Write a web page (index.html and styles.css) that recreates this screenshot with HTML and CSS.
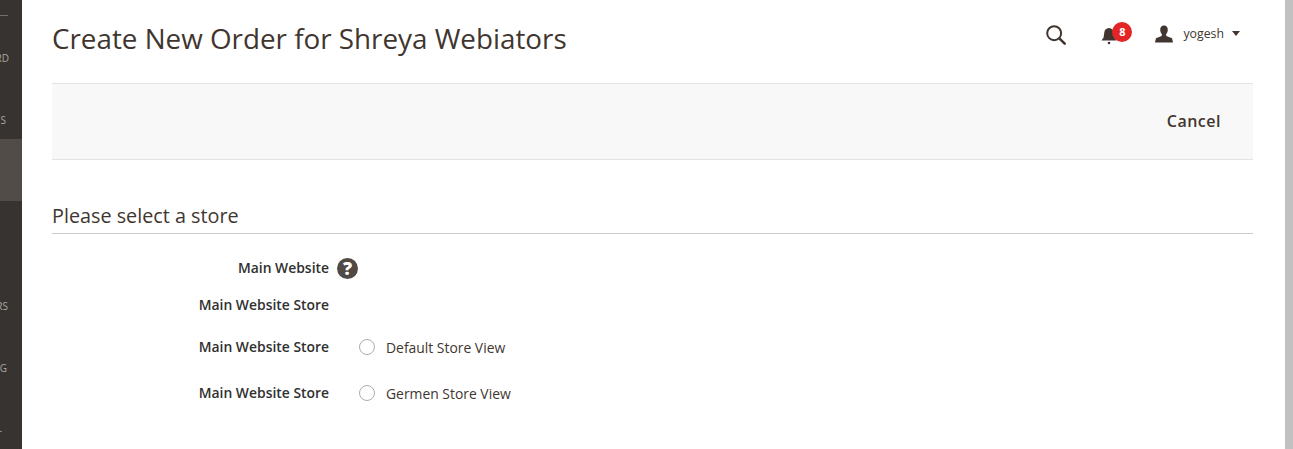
FILE: index.html
```html
<!DOCTYPE html>
<html lang="en">
<head>
    <meta charset="UTF-8">
    <meta name="viewport" content="width=device-width, initial-scale=1.0">
    <title>Create New Order</title>
    <link rel="stylesheet" href="styles.css">
</head>
<body>
    <div class="layout">
        <nav class="sidebar">
            <div class="side-rule"></div>
            <div class="side-item side-dash">RD</div>
            <div class="side-item side-sales">S</div>
            <div class="side-active"></div>
            <div class="side-item side-cust">RS</div>
            <div class="side-item side-mark">G</div>
            <div class="side-item side-last">-</div>
        </nav>

        <main class="content">
            <header class="page-header">
                <h1>Create New Order for Shreya Webiators</h1>
                <div class="actions">
                    <svg class="icon-search" width="22" height="22" viewBox="0 0 24 24">
                        <circle cx="10" cy="10" r="7.6" fill="none" stroke="#41362f" stroke-width="2.2"/>
                        <path d="M15.6 15.6 L21.5 21.5" stroke="#41362f" stroke-width="2.8" stroke-linecap="round"/>
                    </svg>
                    <div class="notify">
                        <svg width="16" height="18" viewBox="0 0 16 18">
                            <path d="M8 1c-3 0-4.600 2.300-4.800 5L2.600 10.500 0.500 13.500H15.500L13.400 10.500 12.800 6C12.600 3.300 11 1 8 1Z" fill="#41362f"/>
                            <circle cx="8" cy="16" r="1.300" fill="#41362f"/>
                        </svg>
                        <span class="badge">8</span>
                    </div>
                    <div class="user">
                        <svg width="20" height="18" viewBox="0 0 20 19">
                            <path d="M10 0.500C7.300 0.500 6 2.500 6 5C6 7 6.700 8.500 7.800 9.700L7.500 11.500 1.500 14 0.500 18.500H19.500L18.500 14 12.500 11.500 12.200 9.700C13.300 8.500 14 7 14 5 14 2.500 12.700 0.500 10 0.500Z" fill="#41362f"/>
                        </svg>
                        <span class="user-name">yogesh</span>
                        <span class="caret"></span>
                    </div>
                </div>
            </header>

            <div class="toolbar">
                <button class="cancel-btn">Cancel</button>
            </div>

            <section class="store-section">
                <h2>Please select a store</h2>
                <div class="store-row row-website">
                    <span class="row-label">Main Website</span>
                    <span class="help">?</span>
                </div>
                <div class="store-row row-group">
                    <span class="row-label">Main Website Store</span>
                </div>
                <div class="store-row row-view">
                    <span class="row-label">Main Website Store</span>
                    <label class="view-option"><span class="radio"></span><span class="view-name">Default Store View</span></label>
                </div>
                <div class="store-row row-view">
                    <span class="row-label">Main Website Store</span>
                    <label class="view-option"><span class="radio"></span><span class="view-name">Germen Store View</span></label>
                </div>
            </section>
        </main>

        <div class="scrollbar"></div>
    </div>
</body>
</html>
```

FILE: styles.css
```css
* {
    margin: 0;
    padding: 0;
    box-sizing: border-box;
}

html, body {
    height: 449px;
    overflow: hidden;
}

body {
    font-family: 'Open Sans', 'Noto Sans', sans-serif;
    color: #41362f;
    background-color: white;
}

.layout {
    display: flex;
    height: 449px;
}

.sidebar {
    width: 22px;
    flex-shrink: 0;
    background-color: #373330;
    color: #aaa6a0;
    font-size: 10px;
    overflow: hidden;
    display: flex;
    flex-direction: column;
}

.side-rule {
    width: 8px;
    height: 1px;
    margin-top: 15px;
    background-color: #736e69;
}

.side-item {
    display: flex;
    justify-content: flex-end;
    height: 14px;
    line-height: 14px;
    white-space: nowrap;
}

.side-dash {
    margin-top: 35px;
    margin-right: 13px;
}

.side-sales {
    margin-top: 48px;
    margin-right: 16px;
}

.side-active {
    height: 62px;
    margin-top: 12px;
    background-color: #514c48;
}

.side-cust {
    margin-top: 98px;
    margin-right: 14px;
}

.side-mark {
    margin-top: 48px;
    margin-right: 15px;
}

.side-last {
    margin-top: 48px;
    margin-right: 20px;
}

.content {
    width: 1201px;
    margin-left: 30px;
    flex-shrink: 0;
}

.page-header {
    height: 83px;
    display: flex;
    align-items: flex-start;
    justify-content: space-between;
}

h1 {
    font-size: 27.8px;
    font-weight: 400;
    line-height: 36px;
    margin-top: 20px;
    color: #41362f;
}

.actions {
    display: flex;
    align-items: center;
    margin-top: 22px;
    margin-right: 13px;
    height: 24px;
}

.icon-search {
    margin-top: 2px;
    margin-right: 34px;
}

.notify {
    position: relative;
    width: 16px;
    height: 18px;
    margin-right: 37px;
    margin-top: 4px;
}

.badge {
    position: absolute;
    left: 11px;
    top: -5px;
    width: 20px;
    height: 20px;
    border-radius: 50%;
    background-color: #e22626;
    color: white;
    font-size: 11px;
    font-weight: 700;
    line-height: 20px;
    text-align: center;
}

.user {
    display: flex;
    align-items: center;
    margin-top: -1px;
}

.user-name {
    font-size: 12.3px;
    margin-left: 9px;
}

.caret {
    width: 0;
    height: 0;
    margin-left: 8px;
    border-left: 4px solid transparent;
    border-right: 4px solid transparent;
    border-top: 5px solid #41362f;
}

.toolbar {
    height: 77px;
    background-color: #f8f8f8;
    border-top: 1px solid #e3e3e3;
    border-bottom: 1px solid #e3e3e3;
    display: flex;
    align-items: center;
    justify-content: flex-end;
    padding-right: 32px;
    padding-bottom: 2px;
}

.cancel-btn {
    font-family: inherit;
    font-size: 16px;
    font-weight: 600;
    letter-spacing: 0.5px;
    color: #41362f;
    background: none;
    border: none;
}

.store-section {
    margin-top: 43px;
}

h2 {
    font-size: 19.8px;
    font-weight: 400;
    line-height: 24px;
    padding-top: 1px;
    padding-bottom: 5px;
    border-bottom: 1px solid #cccccc;
    color: #41362f;
}

.store-row {
    display: flex;
    align-items: center;
    font-size: 13.9px;
}

.row-label {
    width: 277px;
    text-align: right;
    font-weight: 600;
    color: #303030;
    flex-shrink: 0;
}

.row-website {
    margin-top: 21px;
    height: 24px;
}

.row-group {
    margin-top: 15px;
    height: 20px;
}

.row-view {
    margin-top: 18px;
    height: 28px;
}

.help {
    width: 21px;
    height: 21px;
    margin-top: 2px;
    margin-left: 8px;
    border-radius: 50%;
    background-color: #514943;
    color: white;
    font-size: 18px;
    font-weight: 800;
    line-height: 21px;
    text-align: center;
}

.view-option {
    display: flex;
    align-items: center;
    margin-left: 30px;
}

.radio {
    width: 16px;
    height: 16px;
    margin-top: 2px;
    margin-right: 11px;
    border: 1px solid #adadad;
    border-radius: 50%;
    background-color: white;
}

.view-name {
    margin-top: 2px;
}

.scrollbar {
    width: 8px;
    height: 449px;
    margin-left: 32px;
    flex-shrink: 0;
    background-color: #c1c1c1;
}
```
